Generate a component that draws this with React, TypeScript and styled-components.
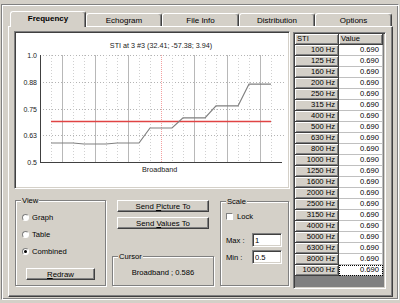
import * as React from 'react'
import styled, { createGlobalStyle } from 'styled-components'

const GlobalStyle = createGlobalStyle`
  html, body { margin: 0; padding: 0; background: #d4d0c8; }
  body { font-family: "Liberation Sans", Arial, sans-serif; font-size: 7.6px; color: #000; }
  * { box-sizing: border-box; }
`

const Window = styled.div`
  width: 400px;
  height: 303px;
  padding-top: 4px;
  background: #d4d0c8;
  overflow: hidden;
`
const Frame = styled.div`
  margin-left: 1px;
  width: 398px;
  height: 296px;
  border-top: 1px solid #808080;
  border-left: 1px solid #808080;
  border-right: 1px solid #fff;
  border-bottom: 1px solid #fff;
  box-shadow: inset 1px 1px 0 #fff, inset -1px -1px 0 #808080;
  padding: 6px 0 0 6px;
`
const TabControl = styled.div`
  width: 385px;
`
const TabStrip = styled.div`
  display: flex;
  align-items: flex-end;
  height: 15px;
  padding-left: 2px;
  position: relative;
  z-index: 2;
`
const Tab = styled.div<{ $active?: boolean; $w: number }>`
  width: ${p => p.$w}px;
  height: ${p => (p.$active ? 16 : 13)}px;
  margin-bottom: ${p => (p.$active ? -1 : 0)}px;
  background: #d4d0c8;
  border-top: 1px solid #fff;
  border-left: 1px solid #fff;
  border-right: 1px solid #404040;
  box-shadow: inset -1px 0 0 #808080;
  border-radius: 3px 3px 0 0;
  display: flex;
  align-items: center;
  justify-content: center;
  font-size: 8px;
  font-weight: ${p => (p.$active ? 700 : 400)};
  padding-bottom: ${p => (p.$active ? 2 : 0)}px;
`
const Panel = styled.div`
  height: 271px;
  border-top: 1px solid #fff;
  border-left: 1px solid #fff;
  border-right: 1px solid #404040;
  border-bottom: 1px solid #404040;
  box-shadow: inset -1px -1px 0 #808080;
  padding: 4px 0 0 5px;
  display: flex;
  gap: 3px;
`
const LeftCol = styled.div`
  width: 276px;
  display: flex;
  flex-direction: column;
`
const ChartBox = styled.div`
  height: 158px;
  background: #fff;
  border-top: 1px solid #808080;
  border-left: 1px solid #808080;
  border-right: 1px solid #fff;
  border-bottom: 1px solid #fff;
  box-shadow: inset 1px 1px 0 #404040, inset -1px -1px 0 #d4d0c8;
  svg { display: block; }
`
const Controls = styled.div`
  display: flex;
  margin-top: 7px;
  padding-left: 1px;
  gap: 6px;
`
const GroupBox = styled.fieldset<{ $w: number; $h: number }>`
  margin: 0;
  padding: 0 5px;
  width: ${p => p.$w}px;
  height: ${p => p.$h}px;
  border: 1px solid #808080;
  box-shadow: inset 1px 1px 0 #fff, 1px 1px 0 #fff;
  min-width: 0;
`
const Legend = styled.legend`
  padding: 0 1px;
  line-height: 9px;
  font-size: 7.6px;
  background: #d4d0c8;
`
const RadioList = styled.div`
  display: flex;
  flex-direction: column;
  gap: 5px;
  padding: 6px 0 0 1px;
`
const RadioRow = styled.label`
  display: flex;
  align-items: center;
  height: 12px;
`
const Radio = styled.span<{ $checked?: boolean }>`
  position: relative;
  width: 7px;
  height: 7px;
  border-radius: 50%;
  border: 1px solid;
  border-color: #808080 #fff #fff #808080;
  background: #fff;
  margin-right: 3px;
  &::after {
    content: '';
    display: ${p => (p.$checked ? 'block' : 'none')};
    position: absolute;
    left: 1px;
    top: 1px;
    width: 3px;
    height: 3px;
    border-radius: 50%;
    background: #000;
  }
`
const Button = styled.div<{ $w: number }>`
  width: ${p => p.$w}px;
  height: 12px;
  align-self: center;
  background: #d4d0c8;
  border-top: 1px solid #fff;
  border-left: 1px solid #fff;
  border-right: 1px solid #404040;
  border-bottom: 1px solid #404040;
  box-shadow: inset -1px -1px 0 #808080;
  display: flex;
  align-items: center;
  justify-content: center;
  font-size: 7.8px;
`
const RedrawWrap = styled.div`
  display: flex;
  justify-content: center;
  margin-top: 11px;
`
const MidCol = styled.div`
  width: 102px;
  height: 90px;
  display: flex;
  flex-direction: column;
  padding-top: 4px;
  gap: 5px;
  & > fieldset { margin-top: auto; }
`
const CursorText = styled.div`
  line-height: 24px;
  text-align: center;
  font-size: 7.6px;
`
const ScaleCol = styled.div`
  padding-top: 1px;
`
const CheckRow = styled.label`
  display: flex;
  align-items: center;
  height: 12px;
  margin-top: 4px;
`
const Check = styled.span`
  width: 7px;
  height: 7px;
  border: 1px solid;
  border-color: #808080 #fff #fff #808080;
  background: #fff;
  margin-right: 4px;
`
const Fields = styled.div`
  display: flex;
  flex-direction: column;
  gap: 3px;
  margin-top: 11px;
`
const FieldRow = styled.div`
  display: flex;
  align-items: center;
`
const FieldLabel = styled.span`
  width: 26px;
`
const Input = styled.input`
  width: 30px;
  height: 14px;
  padding: 0 2px;
  border: 1px solid;
  border-color: #808080 #fff #fff #808080;
  box-shadow: inset 1px 1px 0 #404040, inset -1px -1px 0 #d4d0c8;
  background: #fff;
  font: 7.6px "Liberation Sans", Arial, sans-serif;
  outline: none;
`
const TableFrame = styled.div`
  width: 93px;
  height: 257px;
  margin-top: 1px;
  background: #808080;
  border-top: 1px solid #808080;
  border-left: 1px solid #808080;
  border-right: 1px solid #fff;
  border-bottom: 1px solid #fff;
  box-shadow: inset 1px 1px 0 #404040, inset -1px -1px 0 #d4d0c8;
  padding: 1px;
`
const Grid = styled.div`
  display: grid;
  grid-template-columns: 44px 44px;
  grid-auto-rows: 11px;
`
const Cell = styled.div<{ $kind: 'head' | 'fixed' | 'value'; $focus?: boolean }>`
  font-size: 7.6px;
  line-height: 10px;
  white-space: nowrap;
  overflow: hidden;
  background: ${p => (p.$kind === 'value' ? '#fff' : '#d4d0c8')};
  text-align: ${p => (p.$kind === 'head' ? 'left' : 'right')};
  padding: ${p => (p.$kind === 'head' ? '0 0 0 2px' : '0 3px 0 0')};
  border-right: 1px solid ${p => (p.$kind === 'value' ? '#c0c0c0' : '#404040')};
  border-bottom: 1px solid ${p => (p.$kind === 'value' ? '#c0c0c0' : '#404040')};
  box-shadow: ${p => (p.$kind === 'value' ? 'none' : 'inset 1px 1px 0 #fff, inset -1px -1px 0 #808080')};
  outline: ${p => (p.$focus ? '1px dotted #000' : 'none')};
  outline-offset: -1px;
`

const tabs = [
  { label: 'Frequency', w: 76 },
  { label: 'Echogram', w: 76 },
  { label: 'File Info', w: 77 },
  { label: 'Distribution', w: 76 },
  { label: 'Options', w: 77 },
]

const bands = [100, 125, 160, 200, 250, 315, 400, 500, 630, 800, 1000, 1250, 1600, 2000, 2500, 3150, 4000, 5000, 6300, 8000, 10000]

const sti = [0.589, 0.589, 0.589, 0.584, 0.584, 0.584, 0.589, 0.589, 0.589, 0.659, 0.659, 0.659, 0.706, 0.706, 0.706, 0.762, 0.762, 0.762, 0.864, 0.864, 0.864]

const X0 = 25
const XR = 267
const YT = 23
const YB = 130
const xi = (i: number) => 36 + 11 * i
const yv = (v: number) => YB - (v - 0.5) * 214

const Chart = () => {
  const ticks = [
    { v: 1.0, t: '1.0' },
    { v: 0.875, t: '0.88' },
    { v: 0.75, t: '0.75' },
    { v: 0.625, t: '0.63' },
    { v: 0.5, t: '0.5' },
  ]
  return (
    <svg width={272} height={154} style={{ fontFamily: '"Liberation Sans", Arial, sans-serif' }}>
      <text x={146} y={16} fontSize={7.2} fill="#202020" textAnchor="middle">STI at 3 #3  (32.41; -57.38; 3.94)</text>
      {ticks.slice(0, 4).map(t => (
        <line key={t.t} x1={X0} x2={269} y1={Math.round(yv(t.v)) + 0.5} y2={Math.round(yv(t.v)) + 0.5} stroke="#b4b4b4" strokeDasharray="1 2" />
      ))}
      {bands.map((_, i) => {
        const x = xi(i) + 0.5
        if (i === 10) return <line key={i} x1={x} x2={x} y1={YT} y2={YB} stroke="#f4a0a0" strokeDasharray="1 1" />
        if (i % 3 === 1) return <line key={i} x1={x} x2={x} y1={YT} y2={YB} stroke="#b8b8b8" />
        return <line key={i} x1={x} x2={x} y1={YT} y2={YB} stroke="#d0d0d0" strokeDasharray="1 2" />
      })}
      <line x1={X0 + 0.5} x2={X0 + 0.5} y1={YT} y2={YB + 0.5} stroke="#404040" />
      <line x1={X0} x2={XR} y1={YB + 0.5} y2={YB + 0.5} stroke="#404040" />
      {ticks.map(t => (
        <text key={t.t} x={22} y={Math.round(yv(t.v)) + 2.5} fontSize={7} fill="#202020" textAnchor="end">{t.t}</text>
      ))}
      <line x1={xi(0)} x2={xi(20)} y1={89.5} y2={89.5} stroke="#e04444" strokeWidth={1.6} />
      <polyline
        points={sti.map((v, i) => `${xi(i)},${yv(v).toFixed(1)}`).join(' ')}
        fill="none"
        stroke="#808080"
        strokeWidth={1.2}
      />
      <text x={127} y={140} fontSize={7.2} fill="#202020">Broadband</text>
    </svg>
  )
}

export default function App() {
  return (
    <Window>
      <GlobalStyle />
      <Frame>
        <TabControl>
          <TabStrip>
            {tabs.map((t, i) => (
              <Tab key={t.label} $w={t.w} $active={i === 0}>{t.label}</Tab>
            ))}
          </TabStrip>
          <Panel>
            <LeftCol>
              <ChartBox>
                <Chart />
              </ChartBox>
              <Controls>
                <GroupBox $w={91} $h={90}>
                  <Legend>View</Legend>
                  <RadioList>
                    <RadioRow><Radio />Graph</RadioRow>
                    <RadioRow><Radio />Table</RadioRow>
                    <RadioRow><Radio $checked />Combined</RadioRow>
                  </RadioList>
                  <RedrawWrap>
                    <Button $w={69}><span><u>R</u>edraw</span></Button>
                  </RedrawWrap>
                </GroupBox>
                <MidCol>
                  <Button $w={92}><span>Send <u>P</u>icture To</span></Button>
                  <Button $w={92}><span>Send <u>V</u>alues To</span></Button>
                  <GroupBox $w={102} $h={34}>
                    <Legend>Cursor</Legend>
                    <CursorText>Broadband ; 0.586</CursorText>
                  </GroupBox>
                </MidCol>
                <ScaleCol>
                  <GroupBox $w={69} $h={89}>
                    <Legend>Scale</Legend>
                    <CheckRow><Check />Lock</CheckRow>
                    <Fields>
                      <FieldRow><FieldLabel>Max :</FieldLabel><Input defaultValue="1" /></FieldRow>
                      <FieldRow><FieldLabel>Min :</FieldLabel><Input defaultValue="0.5" /></FieldRow>
                    </Fields>
                  </GroupBox>
                </ScaleCol>
              </Controls>
            </LeftCol>
            <TableFrame>
              <Grid>
                <Cell $kind="head">STI</Cell>
                <Cell $kind="head">Value</Cell>
                {bands.map((b, i) => (
                  <React.Fragment key={b}>
                    <Cell $kind="fixed">{b} Hz</Cell>
                    <Cell $kind="value" $focus={i === bands.length - 1}>0.690</Cell>
                  </React.Fragment>
                ))}
              </Grid>
            </TableFrame>
          </Panel>
        </TabControl>
      </Frame>
    </Window>
  )
}
